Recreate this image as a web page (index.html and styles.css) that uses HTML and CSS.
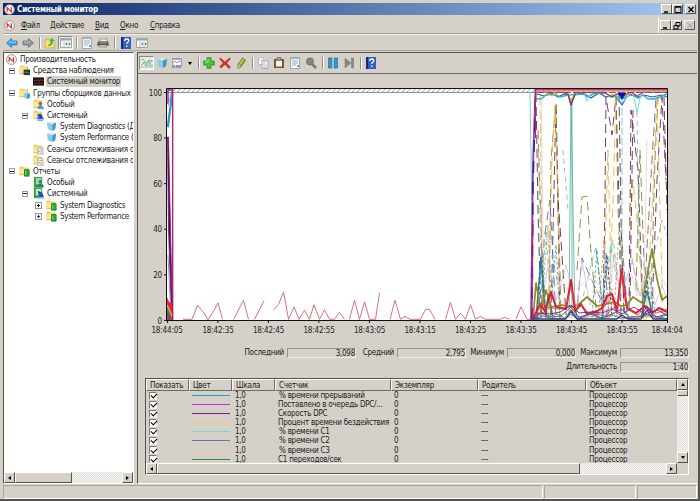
FILE: index.html
```html
<!DOCTYPE html>
<html lang="ru">
<head>
<meta charset="utf-8">
<title>Системный монитор</title>
<link rel="stylesheet" href="styles.css">
</head>
<body>
<svg class="defs" width="0" height="0" aria-hidden="true">
<defs>
<symbol id="perf" viewBox="0 0 12 12"><circle cx="6" cy="6" r="5.4" fill="#fff" stroke="#777" stroke-width=".8"/><circle cx="6" cy="6" r="4.5" fill="#fff" stroke="#dba5a5" stroke-width=".5"/><path d="M3.500 8.500V4l4.500 4.500V3.500" fill="none" stroke="#cf2020" stroke-width="1.200"/></symbol>
<symbol id="folder" viewBox="0 0 12 12"><path d="M.5 1.500 1.500.5h3l1 1.200h4v7.800h-9z" fill="#f2cf65"/><path d="M1 3h8v6H1z" fill="#fae59a"/><path d="M.5 9.500h9V2" fill="none" stroke="#c89e38" stroke-width=".6"/></symbol>
<symbol id="folder-mon" viewBox="0 0 12 12"><use href="#folder"/><path d="M5 5h7v6H5z" fill="#263a28"/><path d="m6 9 1.500-2 1.500 2 2-1" fill="none" stroke="#54b34d" stroke-width=".8"/></symbol>
<symbol id="folder-set" viewBox="0 0 12 12"><use href="#folder"/><path d="m5 6 4-1 3 1v4l-3 2-3-1z" fill="#8bcbe6"/><path d="m9 7 3-1v4l-3 2z" fill="#3e95bd"/></symbol>
<symbol id="folder-user" viewBox="0 0 12 12"><use href="#folder"/><circle cx="8" cy="5" r="2" fill="#9b653d"/><path d="M5 11q0-4 3-4t4 4z" fill="#3e92c9"/><path d="M6 10h5v1.500H6z" fill="#87c1df"/></symbol>
<symbol id="folder-sys" viewBox="0 0 12 12"><use href="#folder"/><path d="M5 4h4l3 6-2 2H5z" fill="#3469c9"/><path d="m6 5 3 1v4z" fill="#1432a2"/><path d="M5 10h7v1.500H5z" fill="#bad9f0"/></symbol>
<symbol id="folder-trace" viewBox="0 0 12 12"><use href="#folder"/><path d="M5 4h6v8H5z" fill="#f8f8ef" stroke="#888" stroke-width=".6"/><path d="M6 6h1m1 0h2M6 8h2m1 0h1M6 10h1m1 0h2" stroke="#777" stroke-width=".8"/></symbol>
<symbol id="folder-green" viewBox="0 0 12 12"><use href="#folder"/><path d="M6 4h5v7H6z" fill="#31b132" stroke="#167b1d"/><path d="M7 5v5" stroke="#7adb72"/></symbol>
<symbol id="report-user" viewBox="0 0 12 12"><path d="M1 0h9v11H1z" fill="#369b48"/><path d="M3 1h6v7H3z" fill="#9cda9c"/><circle cx="8" cy="5" r="1.800" fill="#526d67"/><path d="M5 11q0-4 3-4t4 4z" fill="#2a7f7b"/><path d="M1 11h10" stroke="#176f28"/></symbol>
<symbol id="report-sys" viewBox="0 0 12 12"><path d="M1 0h9v11H1z" fill="#369b48"/><path d="M3 1h6v7H3z" fill="#c4edc6"/><path d="M5 3 10 5l2 5-5 1z" fill="#1d51bd"/><path d="M5 10h7v2H5z" fill="#a7cbe0"/></symbol>
<symbol id="monitor" viewBox="0 0 12 12"><path d="M0 1.500h12v9H0z" fill="#20151a"/><path d="M1 5h3l1-1 2 2 1-2 3 1" fill="none" stroke="#c33030" stroke-width=".8"/><path d="M1 8h10" stroke="#8e4444" stroke-width=".6"/></symbol>
<symbol id="cube" viewBox="0 0 12 12"><path d="m1 2 5-1 5 1-1 7-4 2-4-2z" fill="#8dcbe2"/><path d="m1 2 5-1 5 1-4 1.500z" fill="#d6eff7"/><path d="m7 3.500 4-1.500-1 7-3 2z" fill="#4098c0"/></symbol>
<symbol id="back" viewBox="0 0 12 12"><path d="m.5 6 5-4.500V4H11v4H5.500v2.500z" fill="#3ca8e9" stroke="#2471a8" stroke-width=".7"/><path d="M3 5.200h7" stroke="#93dcff"/></symbol>
<symbol id="forward" viewBox="0 0 12 12"><path d="m11.500 6-5-4.500V4H1v4h5.500v2.500z" fill="#999" stroke="#666" stroke-width=".7"/><path d="M2 5.200h6" stroke="#bbb"/></symbol>
<symbol id="up" viewBox="0 0 12 12"><path d="m1 3 4-1 1 1 5 1-1 7H1z" fill="#f6dc7b" stroke="#c1a047" stroke-width=".6"/><path d="M4 8q3-1 2.500-4H5l3-3 2.500 3H9q0 5-5 5z" fill="#43b536"/></symbol>
<symbol id="pane" viewBox="0 0 12 12"><path d="M.5 1.500h11v9H.5z" fill="#f5f5f1" stroke="#8d9499" stroke-width=".8"/><path d="M1 2h10v1.500H1z" fill="#8faabd"/><path d="M4 4v6M8 4v6" stroke="#aaa" stroke-width=".6"/><path d="M7 5.500v3L5 7zM9 5.500v3L11 7z" fill="#37945a"/></symbol>
<symbol id="sheet" viewBox="0 0 12 12"><path d="M1.500.5h9v11h-9z" fill="#f4f7f8" stroke="#8b9ba6" stroke-width=".8"/><path d="M2 1h8v1.200H2z" fill="#a5bdcb"/><path d="M3 4h6M3 6h6M3 8h4" stroke="#849eaf" stroke-width=".8"/><path d="M8 8h2v2H8z" fill="#819aab"/></symbol>
<symbol id="print" viewBox="0 0 12 12"><path d="M3 2h7v3H3z" fill="#eee" stroke="#777" stroke-width=".6"/><path d="M1 4.500h10l1 4H0z" fill="#555"/><path d="M2 6h8" stroke="#aaa"/><path d="M2.500 8h7v2h-7z" fill="#ddd" stroke="#555" stroke-width=".5"/></symbol>
<symbol id="help" viewBox="0 0 12 12"><path d="M1 0h10v12H1z" fill="#365fc3"/><path d="M1 0h2v12H1z" fill="#152d78"/><path d="M4.700 4q0-2 2-2t2 1.800c0 1.500-2 1.500-2 3.200M6.700 8.500V10" fill="none" stroke="#fff" stroke-width="1.300"/></symbol>
<symbol id="graph" viewBox="0 0 12 12"><path d="M0 1h12v10H0z" fill="#e9f4ee"/><path d="m0 3 2-1 3 4 3-3 4 1M0 9l3-3 2 3 3-5 2 5 2-1" fill="none" stroke="#6d9690" stroke-width=".8"/><path d="m1 6 3-1 3 4 4-5M0 10h12" fill="none" stroke="#74ad74" stroke-width=".7"/></symbol>
<symbol id="type" viewBox="0 0 12 12"><path d="M1.500 1.500h9v8h-9z" fill="#f5f7fc" stroke="#7e8799" stroke-width=".7"/><path d="M2 2h8v1H2z" fill="#92a8d2"/><path d="m2 6 2-2 2 2 2-2 2 1" fill="none" stroke="#66738e" stroke-width=".7"/><path d="M1 8h3v3H1zm4 0h5v3H5z" fill="#8f98b0"/></symbol>
<symbol id="plus" viewBox="0 0 12 12"><path d="M4 .7h4V4h3.300v4H8v3.300H4V8H.7V4H4z" fill="#4dc234" stroke="#268529" stroke-width=".8"/><path d="M5 2v3H2" fill="none" stroke="#a8ed88"/></symbol>
<symbol id="cross" viewBox="0 0 12 12"><path d="M1.500 1 5.800 5 10.500 1l1 1L7.500 6l4 4-1.500 1.500L6 7.500 2 11 .8 9.500 4.300 6 .5 2z" fill="#e52a25" stroke="#a91e1b" stroke-width=".5"/></symbol>
<symbol id="pen" viewBox="0 0 12 12"><path d="m3 7.500 4.500-6.500 3 2-4.500 7-3 1.500z" fill="#91a737" stroke="#57651e" stroke-width=".7"/><path d="m4.500 7.500 4-5.500" stroke="#dfec76"/><path d="m3 8 3 2-3 1.500z" fill="#d3b980"/></symbol>
<symbol id="copy" viewBox="0 0 12 12"><path d="M1.500.5h5v7h-5z" fill="#fff" stroke="#aaa" stroke-width=".7"/><path d="M5 4h6v7.500H5z" fill="#fff" stroke="#8797ae" stroke-width=".8"/><path d="M6 6h3M6 8h4M6 10h4M2.500 3h3" stroke="#93a1b8" stroke-width=".7"/></symbol>
<symbol id="paste" viewBox="0 0 12 12"><path d="M1 2h10v9H1z" fill="#735836"/><path d="M3 3.500h6v6H3z" fill="#f2f1ed"/><path d="M4 .5h4v2.800H4z" fill="#a5a5a5" stroke="#555" stroke-width=".6"/></symbol>
<symbol id="glass" viewBox="0 0 12 12"><path d="m7 7 4 4" stroke="#777" stroke-width="2.500"/><circle cx="5" cy="4.500" r="3.500" fill="#858585" stroke="#737373"/></symbol>
<symbol id="pause" viewBox="0 0 12 12"><path d="M1.500 1h3.300v10H1.500zm5.700 0h3.300v10H7.200z" fill="#2c9bd1" stroke="#236c9c" stroke-width=".7"/></symbol>
<symbol id="next" viewBox="0 0 12 12"><path d="M2 1v10l6-5zM8.500 1h2v10h-2z" fill="#888" stroke="#777" stroke-width=".5"/></symbol>
<pattern id="hatch" width="5" height="5" patternUnits="userSpaceOnUse" x="167" y="88"><path d="m0 4 4-3.500" stroke="#777" stroke-width=".7"/></pattern>
<clipPath id="plot"><path d="M166 88h502v233H166z"/></clipPath>
</defs>
</svg>
<div class="window">
  <header class="titlebar"><svg class="ico"><use href="#perf"/></svg><b>Системный монитор</b>
    <div class="winbtns"><button class="wb"><svg viewBox="0 0 10 9"><path d="M2 7h4" stroke="#000" stroke-width="1.500"/></svg></button><button class="wb"><svg viewBox="0 0 10 9"><path d="M2 1.500h6v6H2zM2 2.200h6" fill="none" stroke="#000"/></svg></button><button class="wb last"><svg viewBox="0 0 10 9"><path d="m2.500 2 5 5m0-5-5 5" stroke="#000" stroke-width="1.300"/></svg></button></div>
  </header>
  <nav class="menubar"><svg class="ico"><use href="#perf"/></svg><span class="m1"><u>Ф</u>айл</span><span class="m2"><u>Д</u>ействие</span><span class="m3"><u>В</u>ид</span><span class="m4"><u>О</u>кно</span><span class="m5"><u>С</u>правка</span>
    <div class="mdi"><button class="wb"><svg viewBox="0 0 10 9"><path d="M2 7h4" stroke="#000" stroke-width="1.500"/></svg></button><button class="wb"><svg viewBox="0 0 10 9"><path d="M4 1.500h4V5H4zM2 4.500h4V8H2z" fill="none" stroke="#000"/></svg></button><button class="wb last"><svg viewBox="0 0 10 9"><path d="m2.500 2 5 5m0-5-5 5" stroke="#999"/></svg></button></div>
  </nav>
  <div class="toolbar"><svg class="ico"><use href="#back"/></svg><svg class="ico g4"><use href="#forward"/></svg><i class="sep"></i><svg class="ico"><use href="#up"/></svg><span class="pressed"><svg class="ico"><use href="#pane"/></svg></span><i class="sep"></i><svg class="ico"><use href="#sheet"/></svg><svg class="ico g4"><use href="#print"/></svg><i class="sep wide"></i><svg class="ico"><use href="#help"/></svg><svg class="ico g4"><use href="#pane"/></svg></div>
  <main class="content">
    <aside class="side">
      <ul class="tree">
        <li class="l0"><svg class="ico"><use href="#perf"/></svg><span>Производительность</span></li>
        <li class="l1"><i class="box"></i><svg class="ico"><use href="#folder-mon"/></svg><span>Средства наблюдения</span></li>
        <li class="l2"><svg class="ico"><use href="#monitor"/></svg><span class="sel">Системный монитор</span></li>
        <li class="l1"><i class="box"></i><svg class="ico"><use href="#folder-set"/></svg><span>Группы сборщиков данных</span></li>
        <li class="l2"><svg class="ico"><use href="#folder-user"/></svg><span>Особый</span></li>
        <li class="l2 exp"><i class="box"></i><svg class="ico"><use href="#folder-sys"/></svg><span>Системный</span></li>
        <li class="l3"><svg class="ico"><use href="#cube"/></svg><span>System Diagnostics (Д</span></li>
        <li class="l3"><svg class="ico"><use href="#cube"/></svg><span>System Performance (</span></li>
        <li class="l2"><svg class="ico"><use href="#folder-trace"/></svg><span>Сеансы отслеживания с</span></li>
        <li class="l2"><svg class="ico"><use href="#folder-trace"/></svg><span>Сеансы отслеживания с</span></li>
        <li class="l1"><i class="box"></i><svg class="ico"><use href="#folder-green"/></svg><span>Отчеты</span></li>
        <li class="l2"><svg class="ico"><use href="#report-user"/></svg><span>Особый</span></li>
        <li class="l2 exp"><i class="box"></i><svg class="ico"><use href="#report-sys"/></svg><span>Системный</span></li>
        <li class="l3 exp"><i class="box plus"></i><svg class="ico"><use href="#folder-green"/></svg><span>System Diagnostics</span></li>
        <li class="l3 exp"><i class="box plus"></i><svg class="ico"><use href="#folder-green"/></svg><span>System Performance</span></li>
      </ul>
      <div class="hscroll"><button class="sb"><i class="left"></i></button><div class="thumb side-thumb"></div><span class="track"></span><button class="sb"><i class="right"></i></button></div>
    </aside>
    <section class="panel">
      <div class="ptools"><span class="pressed"><svg class="ico"><use href="#graph"/></svg></span><svg class="ico a"><use href="#cube"/></svg><svg class="ico b"><use href="#type"/></svg><i class="down drop"></i><i class="sep"></i><svg class="ico"><use href="#plus"/></svg><svg class="ico c"><use href="#cross"/></svg><svg class="ico c"><use href="#pen"/></svg><i class="sep"></i><svg class="ico"><use href="#copy"/></svg><svg class="ico c"><use href="#paste"/></svg><svg class="ico c"><use href="#sheet"/></svg><svg class="ico c"><use href="#glass"/></svg><i class="sep"></i><svg class="ico"><use href="#pause"/></svg><svg class="ico c"><use href="#next"/></svg><i class="sep"></i><svg class="ico"><use href="#help"/></svg></div>
      <svg class="chart" viewBox="138 74 559 264">
        <path d="M167 88h501v232H167z" fill="#fff"/>
        <path d="M167 88h501v4.500H167z" fill="url(#hatch)"/>
        <path d="M167 92.500h368" stroke="#777" stroke-width=".8"/>
        <g fill="none" stroke-linejoin="round" clip-path="url(#plot)">
          <path stroke="#d6606a" stroke-width=".9" d="M183 319.300h9l5.500-14 6 7 4.500 7.500 6-9.500 4-7.500 4.500 16.500M233.500 319.300l10-19 5 19M254.500 319.300l9.500-18.500M273.500 310l5-5.500 5-12.500 5 27.300 5.500-12.500 5 12.500 5.500-9 5 9 4.500-14.500 5.500 14.500 5-9.500 5 9.500h5l5-7 5 7M349.500 319.300l5-19 5 19 5-17.500 5 17.500h6l4-26.500M390 319.300l5-19 5.500 19 4.500-3 5 3h10.500l5-10h4l5.500 10M445.500 319.300l5-17 5 17 5-6 5 6 5-14.500 5 14.500 5-3 5 3h15l4-2 5 2M516 319.300l5-12.500 6 12.500h4"/>
          <!-- high-range dashed counters -->
          <g stroke-width=".9" stroke-dasharray="9 5">
            <path stroke="#63275f" d="M536 93L538 210 541 318M551 315L556 105 560 318M603 315L605 200 606 97 612 135 616 97 619 200 621 318M629 310L631 110 638 170 643 318M652 310L657 180 662 97 666 180"/>
            <path stroke="#8c8130" d="M538 130L541 220 543 315M549 310L551 160 556 102 559 230 561 315M577 270L582 197 587 196 590 240 597 318M616 97L618 210 625 315M636 290L640 150 645 290M651 300L655 160 658 97"/>
            <path stroke="#e6ba43" d="M540 96L543 316M548 320L552 160 555 105 558 200 560 320M603 320L608 150 612 315M616 97L613 200 608 320M630 230L633 180 637 220 644 320M646 320L653 190 657 97 663 320"/>
            <path stroke="#7660a0" d="M541 318L544 240 550 200 556 318M576 318L582 258 590 276 602 302M607 318L606 250M621 230L628 318M643 318L652 160 656 97"/>
            <path stroke="#6b2b30" d="M558 200L561 240 566 315M619 93L621 220 624 315M630 300L633 110M664 97L667 210"/>
          </g>
          <g stroke="#67bdb7" stroke-width=".8">
            <path d="M530 92L533 280"/>
            <path d="M569 318L571 98 575 318M572 98V318" stroke="#4fac9a"/>
            <path stroke-dasharray="7 3" d="M622 98V245L627 318M552 255L558 285M596 248L602 300 611 244 617 282M632 258L638 292"/>
            <path stroke-dasharray="5 4" d="M541 300L546 230 551 310M581 305L591 265 596 247 603 310 613 240 619 285M637 112L639 245 645 300M647 285L662 220 667 235M563 150L568 210M538 145L542 290"/>
          </g>
          <g stroke-width=".7" stroke="#cfafd7"><path d="M540 318L549 258 555 305 566 265 577 310 582 260 590 305 597 290 607 318 614 254 621 297 632 260 640 296 648 266 655 305 662 285 667 300"/><path stroke="#e9c8be" d="M541 92L544 315M647 140L644 290M538 295L559 283 572 292 590 279 611 291 621 285 632 275 637 296 652 270 660 275 667 287"/></g>
          <g stroke-width=".7" stroke-dasharray="3 2"><path stroke="#258c7c" d="M538 320L542 250 546 318M550 318L556 245 560 318M592 318L597 250 603 318M643 318L648 270 656 318"/><path stroke="#9a9642" d="M541 315L548 225 552 315M598 318L604 240 609 318M614 315L619 230 627 315"/></g>
          <path stroke="#2947b3" stroke-dasharray="3 2" d="M537 319L541 257 545 315M602 318L607 255 612 317M642 318L647 280 652 318"/>
          <path stroke="#2c7b90" stroke-width="1.400" d="M536 318L541 258 546 317 548 294 553 318M641 318L647 291 653 318"/>
          <path stroke="#878d26" stroke-width="1.700" d="M533 320L536 283 541 311 546 290 551 307 562 305 571 307 578 305 587 297 597 306 615 302 621 306 627 305 633 297 642 303 647 276 652 249 657 279 662 300 667 296"/>
          <path stroke="#de1838" stroke-width="2" d="M533 319L540 304 545 311 551 292 556 307 566 309 571 280 575 311 581 304 587 314 597 311 602 308 607 296 612 294 617 311 621.500 270 627 308 636 313 645 306 652 313 659 308 667 312"/>
          <g stroke-width=".9">
            <path stroke="#df4a38" d="M535 318L541 303 547 307 557 309 566 307 571 286 576 310 582 305 587 312 597 315 604 307 612 298 617 314 622 274 627 309 637 315 647 307 657 313 667 309"/>
            <path stroke="#7f205d" d="M533 316L541 313 550 314 560 312 571 305 579 313 590 312 602 313 612 309 622 314 634 307 645 314 657 310 667 315"/>
            <path stroke="#1c57b5" d="M534 318L542 313 551 317 561 316 571 307 579 317 590 314 602 318 612 314 622 309 629 317 641 316 647 306 656 317 667 314"/>
            <path stroke="#139178" d="M534 319L542 316 549 317 557 314 565 318 571 310 579 318 592 314 602 318 612 315 622 319 634 317 647 315 657 318 667 315"/>
            <path stroke="#e19c23" d="M535 315L549 315 558 319 566 317 571 309 579 319 592 316 602 319 615 315 627 319 640 316 652 317 667 319"/>
            <path stroke="#ae35aa" d="M535 319L541 311 550 319H565L571 314 578 319 592 313 605 316 615 307 621 317 634 319 647 314 667 319"/>
            <path stroke="#293f90" stroke-width="1.300" d="M533 319H566L571 311 577 319H617L622 315 628 319H641L647 310 653 319H667"/>
          </g>
          <!-- near-maximum counters -->
          <path stroke="#285bbd" stroke-width="1.200" d="M537 94L544 96 551 93 558 97 564 94 568 95 571 105 575 95 583 93 591 98 599 93 606 97 612 95 616 97 622 105 627 96 633 94 637 97 644 95 652 97 662 95 667 97"/>
          <path stroke="#35aec4" stroke-width="1.500" d="M537 99H541L546 95 554 94 560 97 568 95 583 94 588 97 593 94 605 93 611 97 616 96 622 99 627 96 633 95 638 98 643 95 648 99 654 99 660 97 667 94"/>
          <path stroke="#70ded3" d="M584 93L587 101 591 93M633 94L637 112 641 94M614 94L622 103 630 94"/>
          <path stroke="#e1b42b" d="M536 92H545L552 96 559 92H568L571 101 575 92H604L610 96 618 93 626 96 634 92H667"/>
          <path stroke="#8e3352" d="M536 92H561L568 94 571 105 575 93 604 92 612 97 617 94 622 96 632 92 637 96 644 92H667"/>
          <path fill="#0712b8" stroke="#1425ac" d="M618 93H626L622 99z"/>
          <path stroke="#e1b535" d="M536 91.300H667"/>
          <path stroke="#8a3b84" stroke-width=".9" stroke-dasharray="7 2" d="M537 92.500H667"/>
          <path stroke="#c93092" stroke-width="1.600" d="M536 89.700H667"/>
          <path stroke="#9537b4" stroke-width="1.800" d="M531 320L533 165 535.500 89"/>
          <path stroke="#2b218c" stroke-width="1.400" stroke-dasharray="12 9" d="M532 320L533 190 535.500 94"/>
          <path stroke="#ba2267" d="M532 320L533 220M535.500 88V138"/>
          <!-- leading edge at the left side -->
          <path fill="#60105f" stroke="#6c1675" stroke-width=".8" d="M167.500 137h1L172.500 319h-1L168.500 229z"/>
          <path stroke="#2f94d0" stroke-width="2.200" d="M167.800 127L171 103 172 91"/>
          <path stroke="#9a28a1" stroke-width="1.500" d="M167.500 90H172M168 89V104"/>
          <path stroke="#9f91bd" d="M168 106L171 94M168 255L171 317"/>
          <path fill="#dd2645" d="M167 297L169 302 173 303V320H167z"/>
          <path stroke="#ddba22" stroke-width="1.500" d="M167 305L173 318"/><path stroke="#149062" stroke-width="1.500" d="M167 309L171 319"/><path stroke="#255ab9" d="M167 314L170 319"/>
          <path stroke="#b61862" stroke-width="1.300" d="M172.700 89V320"/>
        </g>
        <path d="M166.500 88.500h501v232h-501z" fill="none" stroke="#111"/>
        <path d="M164 92.500h3M164 138h3M164 183.600h3M164 229.200h3M164 274.800h3M164 320.400h3M167.500 320v3M217.900 320v3M268.400 320v3M318.900 320v3M369.400 320v3M420 320v3M470.500 320v3M521 320v3M571.500 320v3M622 320v3M667.500 320v3" stroke="#111"/>
        <g class="ylab"><text x="162" y="95.500">100</text><text x="162" y="141">80</text><text x="162" y="186.500">60</text><text x="162" y="232">40</text><text x="162" y="278">20</text><text x="162" y="323.500">0</text></g>
        <g class="xlab"><text x="167" y="333">18:44:05</text><text x="218" y="333">18:42:35</text><text x="268.500" y="333">18:42:45</text><text x="319" y="333">18:42:55</text><text x="369.500" y="333">18:43:05</text><text x="420" y="333">18:43:15</text><text x="470.500" y="333">18:43:25</text><text x="521" y="333">18:43:35</text><text x="571.500" y="333">18:43:45</text><text x="622" y="333">18:43:55</text><text x="667" y="333">18:44:04</text></g>
      </svg>
      <div class="stats"><label>Последний</label><output>3,098</output><label>Средний</label><output>2,795</output><label>Минимум</label><output>0,000</output><label>Максимум</label><output>13,350</output></div>
      <div class="stats second"><label>Длительность</label><output>1:40</output></div>
      <div class="list">
        <div class="upper">
          <div class="table">
            <div class="row head"><span>Показать</span><span>Цвет</span><span>Шкала</span><span>Счетчик</span><span>Экземпляр</span><span>Родитель</span><span>Объект</span></div>
            <div class="rows">
            <div class="row"><span><i class="check"></i></span><span><i class="line k1"></i></span><span>1,0</span><span class="pct">% времени прерываний</span><span>0</span><span>---</span><span>Процессор</span></div>
            <div class="row"><span><i class="check"></i></span><span><i class="line k2"></i></span><span>1,0</span><span>Поставлено в очередь DPC/...</span><span>0</span><span>---</span><span>Процессор</span></div>
            <div class="row"><span><i class="check"></i></span><span><i class="line k3"></i></span><span>1,0</span><span>Скорость DPC</span><span>0</span><span>---</span><span>Процессор</span></div>
            <div class="row"><span><i class="check"></i></span><span><i class="line k4"></i></span><span>1,0</span><span>Процент времени бездействия</span><span>0</span><span>---</span><span>Процессор</span></div>
            <div class="row"><span><i class="check"></i></span><span><i class="line k5"></i></span><span>1,0</span><span class="pct">% времени C1</span><span>0</span><span>---</span><span>Процессор</span></div>
            <div class="row"><span><i class="check"></i></span><span><i class="line k6"></i></span><span>1,0</span><span class="pct">% времени C2</span><span>0</span><span>---</span><span>Процессор</span></div>
            <div class="row"><span><i class="check"></i></span><span><i class="line k7"></i></span><span>1,0</span><span class="pct">% времени C3</span><span>0</span><span>---</span><span>Процессор</span></div>
            <div class="row"><span><i class="check"></i></span><span><i class="line k8"></i></span><span>1,0</span><span>C1 переходов/сек</span><span>0</span><span>---</span><span>Процессор</span></div>
            </div>
          </div>
          <div class="vscroll"><button class="sb"><i class="upa"></i></button><div class="thumb vthumb"></div><span class="track"></span><button class="sb"><i class="down"></i></button></div>
        </div>
        <div class="hscroll lower"><button class="sb"><i class="left"></i></button><div class="thumb list-thumb"></div><span class="track"></span><button class="sb"><i class="right"></i></button><span class="corner"></span></div>
      </div>
    </section>
  </main>
  <footer class="status"><span></span><span></span><span></span></footer>
</div>
</body>
</html>
```
FILE: styles.css
```css
* { box-sizing: border-box; }
body { margin: 0; width: 700px; height: 501px; overflow: hidden; background: #d5d1c8; color: #222; font: 8px/11px "DejaVu Sans Condensed", "DejaVu Sans", sans-serif; font-stretch: condensed; letter-spacing: -.25px; }
.defs { display: block; height: 0; }
button { font: inherit; padding: 0; }
.window { width: 700px; height: 501px; padding: 3px 1px 1px 3px; border-right: 2px solid #55534f; border-bottom: 2px solid #55534f; display: flex; flex-direction: column; background: #d5d1c8; }
.ico { width: 12px; height: 12px; flex: none; display: block; }
.titlebar { height: 12px; flex: none; display: flex; align-items: center; background: linear-gradient(90deg, #0b246a, #a6caf0); color: #fff; }
.titlebar .ico { width: 11px; height: 11px; margin: 0 2px 0 1px; }
.titlebar b { font-size: 8px; letter-spacing: -.15px; }
.winbtns, .mdi { display: flex; margin-left: auto; }
.winbtns { margin-right: 1px; }
.wb { width: 11px; height: 10px; border: 1px solid; border-color: #fff #555 #555 #fff; background: #d5d1c8; display: flex; }
.wb svg { width: 10px; height: 9px; margin: -.5px; flex: none; }
.wb.last { margin-left: 2px; }
.menubar { height: 18px; flex: none; margin-top: 1px; padding-top: 1px; display: flex; align-items: center; border-bottom: 1px solid #aaa69e; }
.menubar span { flex: none; }
.menubar .ico { margin: 0 6px 0 1px; width: 11px; height: 11px; }
.m1 { width: 29px; } .m2 { width: 45px; } .m3 { width: 25px; } .m4 { width: 30px; }
.mdi { align-self: stretch; align-items: center; border-left: 1px solid #fff; padding: 0 2px 0 1px; }
.toolbar { height: 17px; flex: none; display: flex; align-items: center; padding-left: 3px; border-top: 1px solid #f2f0eb; border-bottom: 1px solid #aaa69e; }
.sep { width: 1px; height: 12px; background: #96928a; margin: 0 4px 0 5px; flex: none; box-shadow: 1px 0 #fff; }
.toolbar .sep { margin: 0 4px 0 5px; }
.toolbar .sep.wide { margin-right: 5px; }
.toolbar .g4 { margin-left: 4px; }
.pressed { width: 15px; height: 14px; border: 1px solid; border-color: #8d8981 #fff #fff #8d8981; background: #e9e7e3; display: grid; place-items: center; flex: none; }
.toolbar .pressed { margin-left: 2px; margin-right: -2px; }
.content { display: flex; height: 432px; flex: none; margin-top: 1px; gap: 3px; }
.side { width: 131px; flex: none; display: flex; flex-direction: column; border: 1px solid; border-color: #55534f #fff #fff #55534f; background: #fff; overflow: hidden; }
.tree { list-style: none; margin: 1px 0 0; padding: 0; height: 418px; overflow: hidden; width: 129px; }
.tree li { display: flex; align-items: center; height: 11.200px; white-space: nowrap; }
.tree .ico { width: 11px; height: 11px; margin-right: 3px; }
.tree span { line-height: 11px; }
.l0 { padding-left: 2px; } .l1 { padding-left: 5px; } .l2 { padding-left: 29px; } .l2.exp { padding-left: 18px; } .l3 { padding-left: 42px; letter-spacing: -.32px; } .l3.exp { padding-left: 31px; }
.tree .sel { background: #d5d1c8; padding: 0 1px; margin-left: -1px; }
.box { width: 6px; height: 6px; margin-right: 5px; flex: none; border: 1px solid #999; background: linear-gradient(#222, #222) center / 4px 1px no-repeat; }
.l1 .box { margin-right: 4px; }
.box.plus { background: linear-gradient(#222, #222) center / 3px 1px no-repeat, linear-gradient(#222, #222) center / 1px 3px no-repeat; width: 7px; height: 7px; margin-right: 4px; }
.hscroll { height: 11px; display: flex; flex: none; }
.sb { width: 11px; height: 11px; flex: none; border: 1px solid; border-color: #fff #55534f #55534f #fff; background: #d5d1c8; display: grid; place-items: center; }
.sb i, .drop { border: 2px solid transparent; width: 0; height: 0; }
.left { border-right: 3px solid #000 !important; border-left: 0 !important; }
.right { border-left: 3px solid #000 !important; border-right: 0 !important; }
.upa { border-bottom: 3px solid #000 !important; border-top: 0 !important; }
.down { border-top: 3px solid #000 !important; border-bottom: 0 !important; }
.thumb { border: 1px solid; border-color: #fff #55534f #55534f #fff; background: #d5d1c8; flex: none; }
.side-thumb { width: 57px; }
.track { flex: 1; background: repeating-conic-gradient(#e4e1dc 0 25%, #f5f4f2 0 50%) 0 0 / 2px 2px; }
.panel { width: 560px; flex: none; display: flex; flex-direction: column; border-left: 1px solid #55534f; border-top: 1px solid #55534f; border-bottom: 1px solid #fff; }
.ptools { height: 21px; flex: none; display: flex; align-items: center; padding-left: 1px; border-bottom: 1px solid #6e6b65; }
.ptools .ico.a { margin-left: 2px; } .ptools .ico.b { margin-left: 3px; } .ptools .ico.c { margin-left: 4px; }
.drop { margin: 0 1px 0 5px; }
.chart { display: block; width: 559px; height: 264px; flex: none; }
.chart text { font-size: 8px; fill: #222; letter-spacing: -.15px; }
.ylab { text-anchor: end; } .xlab { text-anchor: middle; }
.stats { display: grid; grid-template-columns: 40px 69px 35px 69px 35px 69px 38px 69px; justify-content: end; column-gap: 3px; align-items: center; height: 11px; margin: 9px 8px 0 0; flex: none; text-align: right; white-space: nowrap; }
.stats.second { margin-top: 3px; grid-template-columns: 60px 69px; }
.stats label { justify-self: end; }
.stats output { width: 69px; height: 10px; line-height: 9px; text-align: right; border: 1px solid; border-color: #96928a #eee #eee #96928a; }
.list { margin: 6px 0 0 7px; width: 544px; height: 97px; flex: none; border: 1px solid; border-color: #55534f #fff #fff #55534f; display: flex; flex-direction: column; }
.upper { display: flex; height: 84px; flex: none; }
.table { width: 531px; overflow: hidden; }
.row { display: grid; grid-template-columns: 43px 43px 43px 116px 87px 108px 91px; height: 9.100px; line-height: 10px; white-space: nowrap; }
.row > span { padding-left: 3px; overflow: hidden; }
.head { height: 12px; }
.head > span { border: 1px solid; border-color: #fff #6e6b65 #6e6b65 #fff; line-height: 11px; }
.rows { height: 72px; overflow: hidden; }
.row .pct { padding-left: 4px; }
.check { display: block; width: 8px; height: 8px; margin-top: .5px; background: #fff; border: 1px solid; border-color: #777 #eee #eee #777; }
.check::after { content: ""; display: block; width: 5px; height: 3px; margin: .5px 0 0 .5px; border-left: 1.500px solid #000; border-bottom: 1.500px solid #000; transform: rotate(-45deg); }
.line { display: block; height: 1px; width: 38px; margin-top: 4px; }
.k1 { background: #1a9fd0; } .k2 { background: #d528d5; } .k3 { background: #722187; } .k4 { background: #e8cf60; } .k5 { background: #74d8d4; } .k6 { background: #7970aa; } .k7 { background: #ecc9ae; } .k8 { background: #358843; }
.vscroll { width: 11px; display: flex; flex-direction: column; }
.vthumb { height: 6px; }
.list-thumb { width: 423px; }
.corner { width: 11px; }
.status { height: 14px; margin-top: 1px; display: grid; grid-template-columns: 540px 92px 1fr; gap: 1px; flex: none; }
.status span { border: 1px solid; border-color: #aaa69e #fff #fff #aaa69e; }
```
